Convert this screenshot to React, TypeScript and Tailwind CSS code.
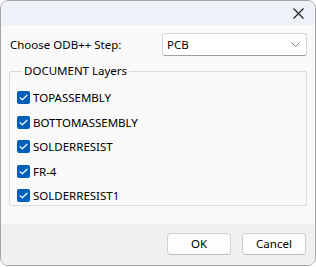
import React from "react";

const rows = ["TOPASSEMBLY", "BOTTOMASSEMBLY", "SOLDERRESIST", "FR-4", "SOLDERRESIST1"];

function Check() {
  return (
    <span className="flex h-[13px] w-[13px] shrink-0 items-center justify-center rounded-[2px] bg-[#005fb8]">
      <svg width="9" height="7" viewBox="0 0 9 7" fill="none">
        <path d="M1 3.6 L3.3 5.8 L8 1.2" stroke="white" strokeWidth="1.2" strokeLinecap="round" strokeLinejoin="round" />
      </svg>
    </span>
  );
}

export default function App() {
  return (
    <div className="h-[267px] w-[316px] bg-white" style={{ fontFamily: '"Noto Sans", "Open Sans", sans-serif' }}>
      <div className="flex h-[266px] w-[316px] flex-col overflow-hidden rounded-[8px] border border-[#a6a6a6] text-[11.5px] text-black">
        <div className="flex h-[24px] shrink-0 items-start justify-end bg-[#eef2f8] pr-[11px] pt-[7px]">
          <svg width="11" height="11" viewBox="0 0 11 11">
            <path d="M0.5 0.5 L10.5 10.5 M10.5 0.5 L0.5 10.5" stroke="#1a1a1a" strokeWidth="1.1" />
          </svg>
        </div>
        <div className="flex flex-1 flex-col bg-[#f9f9f9] px-[8px] pt-[8px]">
          <div className="flex h-[23px] items-center">
            <span className="ml-[1px] w-[152px]">Choose ODB++ Step:</span>
            <div className="flex h-[23px] flex-1 items-center justify-between rounded-[3px] border border-[#d5d5d5] border-b-[#9e9e9e] bg-white pl-[4px] pr-[6px]">
              <span>PCB</span>
              <svg width="9" height="5" viewBox="0 0 9 5" fill="none">
                <path d="M0.5 0.5 L4.5 4.5 L8.5 0.5" stroke="#6b6b6b" strokeWidth="0.9" />
              </svg>
            </div>
          </div>
          <fieldset className="mt-[7px] h-[143px] rounded-[2px] border border-[#dcdcdc] pl-[7px]">
            <legend className="ml-[5px] px-[2px] leading-[16px]">DOCUMENT Layers</legend>
            <div className="mt-[12px] flex flex-col gap-[11.5px]">
              {rows.map((r) => (
                <div key={r} className="flex h-[13px] items-center gap-[3px]">
                  <Check />
                  <span className="leading-[13px]">{r}</span>
                </div>
              ))}
            </div>
          </fieldset>
        </div>
        <div className="flex h-[41px] shrink-0 items-start justify-end gap-[11px] bg-[#f0f0f0] pr-[9px] pt-[9px]">
          <button className="h-[22px] w-[64px] rounded-[4px] border border-[#d0d0d0] border-b-[#bcbcbc] bg-[#fdfdfd] leading-[20px]">OK</button>
          <button className="h-[22px] w-[64px] rounded-[4px] border border-[#d0d0d0] border-b-[#bcbcbc] bg-[#fdfdfd] leading-[20px]">Cancel</button>
        </div>
      </div>
    </div>
  );
}
